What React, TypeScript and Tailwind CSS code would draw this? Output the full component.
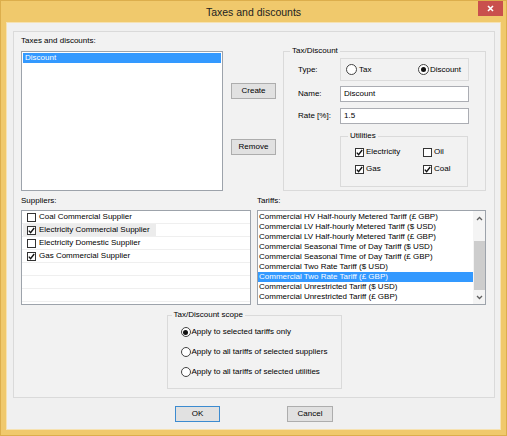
import React from 'react';

const tariffs = [
  'Commercial HV Half-hourly Metered Tariff (£ GBP)',
  'Commercial LV Half-hourly Metered Tariff ($ USD)',
  'Commercial LV Half-hourly Metered Tariff (£ GBP)',
  'Commercial Seasonal Time of Day Tariff ($ USD)',
  'Commercial Seasonal Time of Day Tariff (£ GBP)',
  'Commercial Two Rate Tariff ($ USD)',
  'Commercial Two Rate Tariff (£ GBP)',
  'Commercial Unrestricted Tariff ($ USD)',
  'Commercial Unrestricted Tariff (£ GBP)',
];

const suppliers = [
  { name: 'Coal Commercial Supplier', checked: false },
  { name: 'Electricity Commercial Supplier', checked: true, hot: true },
  { name: 'Electricity Domestic Supplier', checked: false },
  { name: 'Gas Commercial Supplier', checked: true },
];

function Check({ checked }: { checked: boolean }) {
  return (
    <span className="w-[9px] h-[9px] shrink-0 border border-[#333] bg-white flex items-center justify-center">
      {checked && (
        <svg width="7" height="7" viewBox="0 0 7 7">
          <path d="M0.8 3.6 L2.6 5.6 L6.2 1" fill="none" stroke="#111" strokeWidth="1.4" />
        </svg>
      )}
    </span>
  );
}

function Radio({ checked, big }: { checked: boolean; big?: boolean }) {
  return (
    <span
      className={`${big ? 'w-[11px] h-[11px]' : 'w-[10px] h-[10px]'} shrink-0 rounded-full border border-[#444] bg-white flex items-center justify-center`}
    >
      {checked && <span className="w-[5px] h-[5px] rounded-full bg-[#111]" />}
    </span>
  );
}

function Btn({ label, primary, w }: { label: string; primary?: boolean; w: string }) {
  return (
    <button
      className={`${w} h-[16px] flex items-center justify-center bg-[#e1e1e1] border ${
        primary ? 'border-[#3c8bd0]' : 'border-[#adadad]'
      } text-[8px] leading-[10px] text-black`}
    >
      {label}
    </button>
  );
}

export default function App() {
  return (
    <div className="w-[507px] h-[436px] bg-[#f0c96c] border border-[#dcae4c] font-['Liberation_Sans',Arial,sans-serif] text-black text-[8px] leading-[10px] overflow-hidden">
      {/* title bar */}
      <div className="h-[21px] relative flex items-center justify-center">
        <span className="text-[10.5px] leading-[12px] text-[#222]">Taxes and discounts</span>
        <div className="absolute right-[3px] top-0 w-[25px] h-[15px] bg-[#c9504d] flex items-center justify-center">
          <svg width="7" height="7" viewBox="0 0 7 7">
            <path d="M1 1 L6 6 M6 1 L1 6" stroke="white" strokeWidth="1.6" />
          </svg>
        </div>
      </div>

      {/* client */}
      <div className="ml-[5px] w-[495px] h-[408px] bg-[#f0f0f0] border border-[#f6e2b2]">
        <div className="ml-[6px] mt-[8px] w-[482px] h-[367px] border border-[#dadada] bg-[#f2f2f2]">
          {/* top section */}
          <div className="flex items-start pl-[7px]">
            <div className="pt-[4px]">
              <div>Taxes and discounts:</div>
              <div className="mt-[5px] w-[202px] h-[140px] border border-[#9da3ab] bg-white p-px">
                <div className="h-[10px] bg-[#3399ff] text-white pl-[2px]">Discount</div>
              </div>
            </div>

            <div className="ml-[8px] mt-[51px] flex flex-col">
              <Btn label="Create" w="w-[45px]" />
              <div className="mt-[40px]">
                <Btn label="Remove" w="w-[45px]" />
              </div>
            </div>

            <fieldset className="ml-[7px] mt-[14px] w-[203px] h-[145px] border border-[#dadada]">
              <legend className="ml-[6px] px-[2px] leading-[10px]">Tax/Discount</legend>
              <div className="pl-[14px]">
                <div className="mt-[2px] flex items-center">
                  <span className="w-[42px]">Type:</span>
                  <div className="w-[129px] h-[23px] border border-[#dcdcdc] flex items-center pl-[5px] pr-[7px]">
                    <span className="flex items-center gap-[2px]">
                      <Radio checked={false} big />
                      <span>Tax</span>
                    </span>
                    <span className="ml-auto flex items-center gap-[1px]">
                      <Radio checked big />
                      <span>Discount</span>
                    </span>
                  </div>
                </div>
                <div className="mt-[5px] flex items-center">
                  <span className="w-[42px]">Name:</span>
                  <div className="w-[129px] h-[16px] border border-[#abadb3] bg-white flex items-center pl-[3px]">
                    Discount
                  </div>
                </div>
                <div className="mt-[6px] flex items-center">
                  <span className="w-[42px]">Rate [%]:</span>
                  <div className="w-[129px] h-[16px] border border-[#abadb3] bg-white flex items-center pl-[3px]">
                    1.5
                  </div>
                </div>
                <fieldset className="ml-[42px] mt-[7px] w-[128px] h-[56px] border border-[#dadada]">
                  <legend className="ml-[7px] px-[2px] leading-[10px]">Utilities</legend>
                  <div className="pl-[14px] mt-[5px] grid grid-cols-[68px_1fr] gap-y-[5px]">
                    <span className="h-[12px] flex items-center gap-[2px]">
                      <Check checked />
                      <span>Electricity</span>
                    </span>
                    <span className="h-[12px] flex items-center gap-[2px]">
                      <Check checked={false} />
                      <span>Oil</span>
                    </span>
                    <span className="h-[12px] flex items-center gap-[2px]">
                      <Check checked />
                      <span>Gas</span>
                    </span>
                    <span className="h-[12px] flex items-center gap-[2px]">
                      <Check checked />
                      <span>Coal</span>
                    </span>
                  </div>
                </fieldset>
              </div>
            </fieldset>
          </div>

          {/* suppliers / tariffs */}
          <div className="mt-[5px] pl-[7px] flex gap-[6px]">
            <div>
              <div>Suppliers:</div>
              <div className="mt-[4px] w-[230px] h-[95px] border border-[#9da3ab] bg-white overflow-hidden">
                {Array.from({ length: 7 }).map((_, i) => {
                  const s = suppliers[i];
                  return (
                    <div key={i} className="h-[13px] border-b border-[#efefef] flex items-center pl-px">
                      {s && (
                        <span className={`h-[12px] flex items-center pl-[4px] pr-[6px] ${s.hot ? 'bg-[#ececec]' : ''}`}>
                          <Check checked={s.checked} />
                          <span className="ml-[3px]">{s.name}</span>
                        </span>
                      )}
                    </div>
                  );
                })}
              </div>
            </div>
            <div>
              <div>Tariffs:</div>
              <div className="mt-[4px] w-[229px] h-[95px] border border-[#9da3ab] bg-white flex">
                <div className="flex-1 pt-px">
                  {tariffs.map((t, i) => (
                    <div
                      key={t}
                      className={`h-[10px] pl-px whitespace-nowrap ${i === 6 ? 'bg-[#3399ff] text-white' : ''}`}
                    >
                      {t}
                    </div>
                  ))}
                </div>
                <div className="w-[12px] bg-[#f4f4f4] flex flex-col items-center">
                  <div className="h-[14px] flex items-center justify-center">
                    <svg width="7" height="5" viewBox="0 0 7 5">
                      <path d="M1 4 L3.5 1.5 L6 4" fill="none" stroke="#606060" strokeWidth="1.3" />
                    </svg>
                  </div>
                  <div className="mt-[16px] w-[11px] h-[49px] bg-[#cdcdcd]" />
                  <div className="mt-auto h-[13px] flex items-center justify-center">
                    <svg width="7" height="5" viewBox="0 0 7 5">
                      <path d="M1 1 L3.5 3.5 L6 1" fill="none" stroke="#606060" strokeWidth="1.3" />
                    </svg>
                  </div>
                </div>
              </div>
            </div>
          </div>

          {/* scope */}
          <fieldset className="mx-auto mt-[5px] w-[175px] h-[79px] border border-[#dadada]">
            <legend className="ml-[4px] px-[2px] leading-[10px]">Tax/Discount scope</legend>
            <div className="pl-[13px] mt-[6px] flex flex-col gap-[8px]">
              {[
                'Apply to selected tariffs only',
                'Apply to all tariffs of selected suppliers',
                'Apply to all tariffs of selected utilities',
              ].map((t, i) => (
                <span key={t} className="h-[12px] flex items-center gap-[1px]">
                  <Radio checked={i === 0} />
                  <span>{t}</span>
                </span>
              ))}
            </div>
          </fieldset>
        </div>

        {/* dialog buttons */}
        <div className="mt-[8px] ml-[168px] flex gap-[67px]">
          <Btn label="OK" primary w="w-[45px]" />
          <Btn label="Cancel" w="w-[46px]" />
        </div>
      </div>
    </div>
  );
}
